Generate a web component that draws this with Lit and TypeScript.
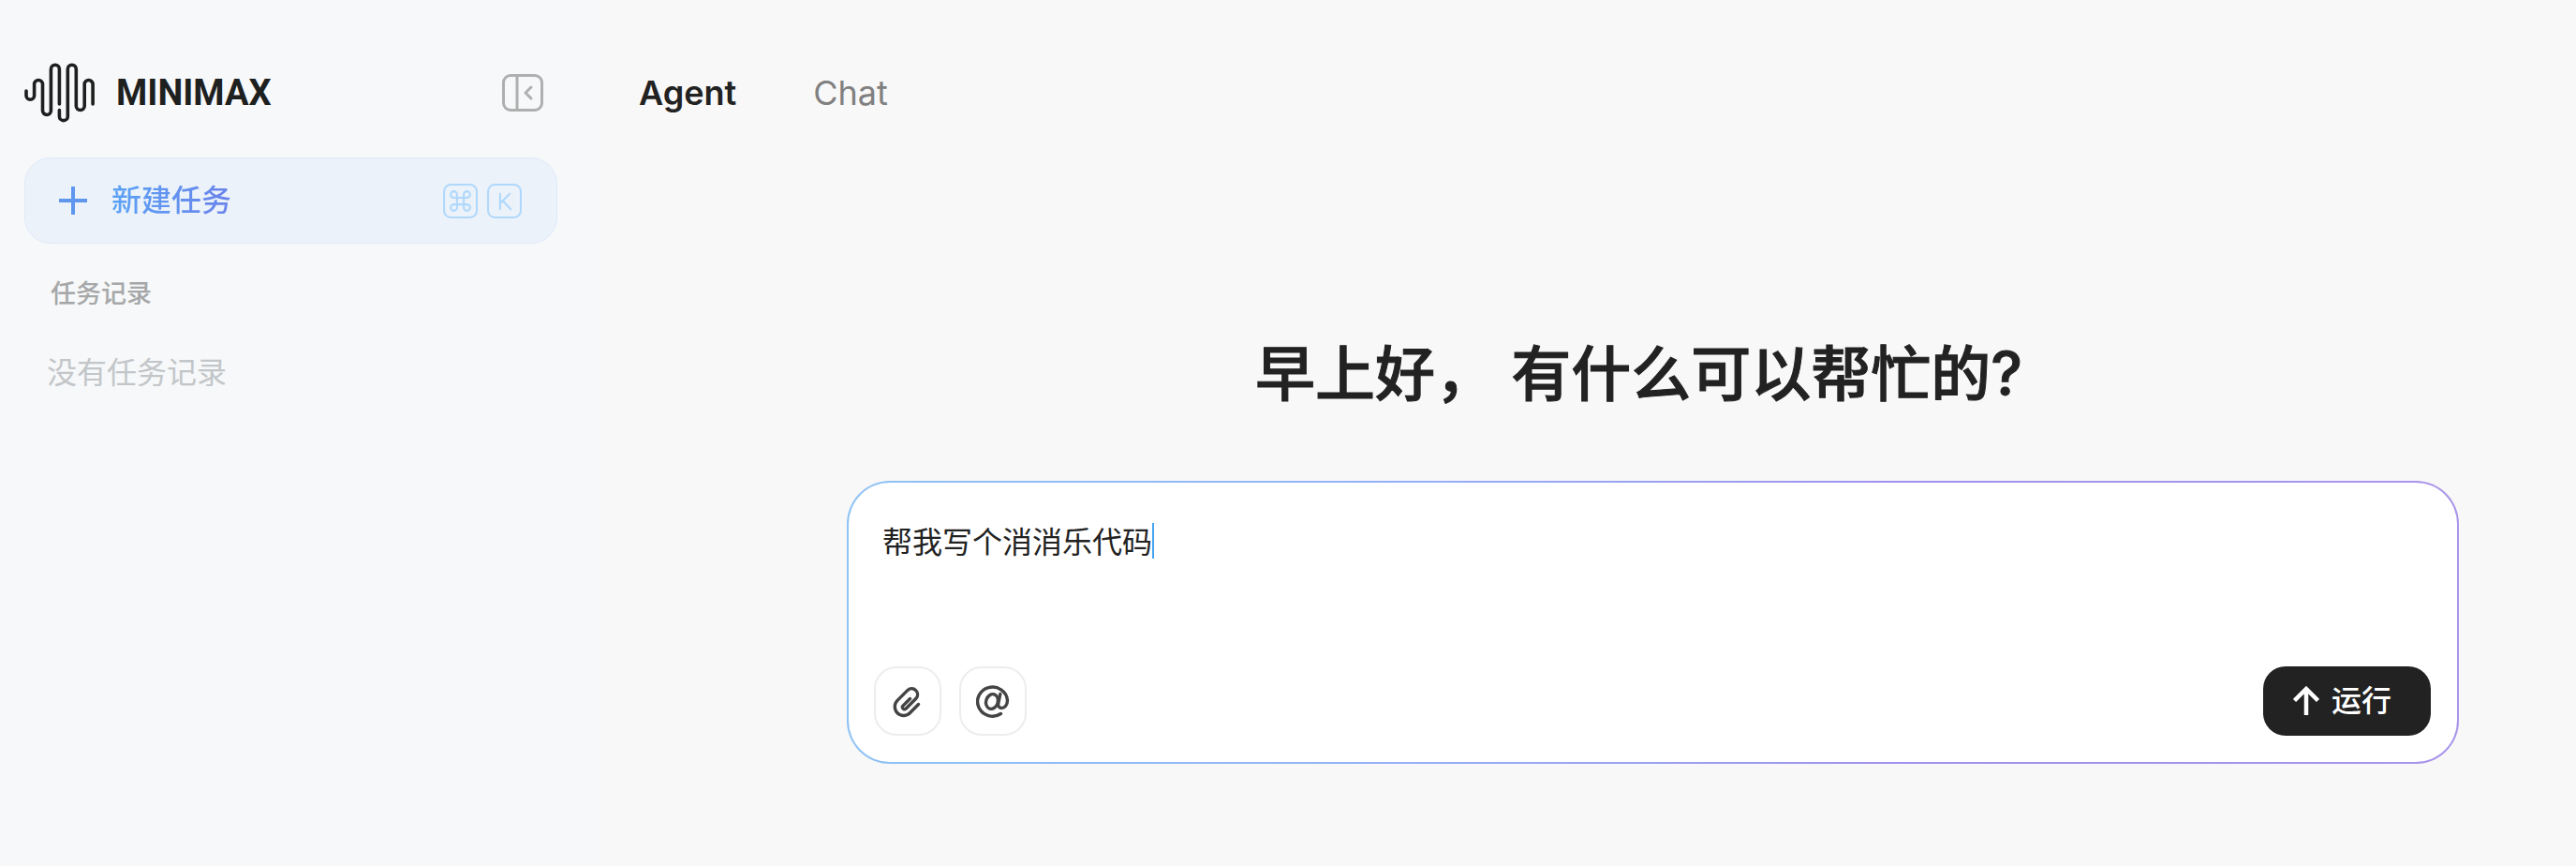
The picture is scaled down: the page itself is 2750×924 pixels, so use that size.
import { LitElement, html, css, svg } from "lit";
import { customElement, state } from "lit/decorators.js";

const logo = svg`<path d="M2 30v5a4.300 4.300 0 0 0 8.600 0V23a4.450 4.450 0 0 1 8.900 0V51a4.450 4.450 0 0 0 8.900 0V6.700a4.500 4.500 0 0 1 9 0V44M37.400 50.500V57.200a4.450 4.450 0 0 0 8.900 0V6.700a4.500 4.500 0 0 1 9 0V46a4.450 4.450 0 0 0 8.900 0V23a4.450 4.450 0 0 1 8.900 0V44"/>`;

@customElement("app-sidebar")
export class AppSidebar extends LitElement {
  static styles = css`
    :host {
      display: block;
      box-sizing: border-box;
      padding: 64px 42px 0 26px;
      background: #f6f8f9;
      font-family: Inter, "Noto Sans CJK SC", sans-serif;
    }
    button { font: inherit; border: 0; background: none; padding: 0; cursor: pointer; }
    svg { display: block; fill: none; stroke: currentColor; stroke-linecap: round; stroke-linejoin: round; }
    .head { display: flex; align-items: center; justify-content: space-between; height: 70px; padding-right: 14px; }
    .brand { display: flex; align-items: center; gap: 22px; color: #1e1f1f; text-decoration: none; }
    .logo { width: 76px; height: 64px; stroke-width: 3.6; }
    .word { font: 700 38px/48px Roboto, sans-serif; }
    .toggle { color: #aeb0b0; }
    .toggle svg { width: 46px; height: 42px; stroke-width: 3; }
    .new {
      display: flex;
      align-items: center;
      box-sizing: border-box;
      width: 100%;
      height: 92px;
      margin-top: 34px;
      padding: 0 37px 0 36px;
      border: 1px solid #e0eaf9;
      border-radius: 28px;
      background: #ebf2fa;
    }
    .plus { width: 30px; height: 30px; stroke: #5f97ee; stroke-width: 4; stroke-linecap: butt; margin-right: 26px; }
    .label {
      font-size: 32px;
      line-height: 48px;
      font-weight: 500;
      color: transparent;
      background: linear-gradient(90deg, #5aa2f5, #6b83ea);
      background-clip: text;
    }
    .keys { display: flex; gap: 10px; margin-left: auto; color: #b0d8fb; }
    .keys svg { width: 37px; height: 37px; stroke-width: 2; }
    h2 { margin: 34px 28px 0; font-size: 27px; line-height: 40px; font-weight: 500; color: #a6a7a8; }
    p { margin: 40px 24px 0; font-size: 32px; line-height: 48px; color: #c3c6c9; }
  `;

  render() {
    return html`
      <div class="head">
        <a class="brand" href="#">
          <svg class="logo" viewBox="0 0 76 64" aria-hidden="true">${logo}</svg>
          <span class="word">MINIMAX</span>
        </a>
        <button class="toggle" aria-label="收起侧边栏">
          <svg viewBox="0 0 46 42"><rect x="2.500" y="2.500" width="41" height="37" rx="7.500"/><path d="M17 2.500v37M32 15 26 21 32 27"/></svg>
        </button>
      </div>
      <button class="new">
        <svg class="plus" viewBox="0 0 30 30"><path d="M15 0v30M0 15h30"/></svg>
        <span class="label">新建任务</span>
        <span class="keys">
          <svg viewBox="0 0 36 36"><rect x="1" y="1" width="34" height="34" rx="7"/><path d="M14.500 14.500h7v7h-7zM14.500 14.500h-3.300a3.300 3.300 0 1 1 3.300-3.300zM21.500 14.500v-3.300a3.300 3.300 0 1 1 3.300 3.300zM21.500 21.500h3.300a3.300 3.300 0 1 1-3.300 3.300zM14.500 21.500v3.300a3.300 3.300 0 1 1-3.300-3.300z"/></svg>
          <svg viewBox="0 0 36 36"><rect x="1" y="1" width="34" height="34" rx="7"/><path d="M13.500 10.500v16M23.500 10.500 13.500 20.500M16.500 18l8 8.500"/></svg>
        </span>
      </button>
      <h2>任务记录</h2>
      <p>没有任务记录</p>
    `;
  }
}

@customElement("prompt-box")
export class PromptBox extends LitElement {
  @state() private text = "帮我写个消消乐代码";

  static styles = css`
    :host {
      display: block;
      padding: 40px 28px 28px 27px;
      border: 2px solid transparent;
      border-radius: 46px;
      background: linear-gradient(#fff, #fff) padding-box, linear-gradient(90deg, #8fc3f5, #93b4f7 30%, #a092ee 65%, #a995ea) border-box;
      font-family: Inter, "Noto Sans CJK SC", sans-serif;
    }
    svg { display: block; fill: none; stroke: currentColor; stroke-linecap: round; stroke-linejoin: round; }
    .field { display: grid; height: 156px; padding: 0 9px; font-size: 32px; line-height: 48px; }
    textarea, .mirror { grid-area: 1 / 1; font: inherit; margin: 0; padding: 0; white-space: pre-wrap; }
    textarea { border: 0; outline: 0; resize: none; background: none; color: #222; caret-color: transparent; }
    .mirror { color: transparent; pointer-events: none; }
    .caret { display: inline-block; width: 2px; height: 38px; margin-top: 3px; vertical-align: top; background: #45a4ef; }
    .bar { display: flex; align-items: center; gap: 19px; }
    button {
      display: flex;
      align-items: center;
      justify-content: center;
      box-sizing: border-box;
      width: 72px;
      height: 74px;
      padding: 0;
      border: 2px solid #ededed;
      border-radius: 24px;
      background: #fff;
      color: #444;
      font: inherit;
    }
    button svg { width: 36px; height: 36px; stroke-width: 3.4; }
    .run {
      width: auto;
      gap: 13px;
      margin-left: auto;
      padding: 0 42px 0 32px;
      border: 0;
      background: #222;
      color: #fff;
      font-size: 32px;
      line-height: 48px;
      font-weight: 500;
    }
    .run svg { width: 28px; height: 32px; stroke-width: 4.500; stroke-linecap: butt; stroke-linejoin: miter; }
  `;

  render() {
    return html`
      <div class="field">
        <textarea
          aria-label="任务描述"
          .value=${this.text}
          @input=${(e: Event) => (this.text = (e.target as HTMLTextAreaElement).value)}
        ></textarea>
        <div class="mirror" aria-hidden="true">${this.text}<span class="caret"></span></div>
      </div>
      <div class="bar">
        <button aria-label="添加附件">
          <svg viewBox="0 0 36 36"><path d="M29.500 21.500 20.300 30.700A9.400 9.400 0 0 1 7 17.400L18 6.400a6.300 6.300 0 0 1 8.900 8.900L16 26.200a2.200 2.200 0 0 1-3.100-3.100L20.500 15.500"/></svg>
        </button>
        <button aria-label="提及">
          <svg viewBox="0 0 36 36"><path d="M26.500 31.500A16 15.500 0 1 1 33.500 17C33.500 22.500 30.500 25.500 27.300 25.500S23.300 23 23.800 20.500L25.800 10.500"/><ellipse cx="17" cy="18.500" rx="6.300" ry="8" transform="rotate(18 17 18.500)"/></svg>
        </button>
        <button class="run">
          <svg viewBox="0 0 28 32"><path d="M14 31V3.500M1.500 15.500 14 3l12.500 12.500"/></svg>
          <span>运行</span>
        </button>
      </div>
    `;
  }
}

@customElement("app-root")
export class AppRoot extends LitElement {
  static styles = css`
    :host {
      display: grid;
      grid-template-columns: 637px 1fr;
      min-height: 100vh;
      background: #f8f8f8;
      color: #222;
      font-family: Inter, "Noto Sans CJK SC", sans-serif;
    }
    main { display: flex; flex-direction: column; }
    nav { display: flex; gap: 82px; padding: 75px 45px 0; }
    nav a { font-size: 36px; line-height: 48px; color: #808080; text-decoration: none; }
    nav .active { color: #222; font-weight: 600; }
    .stage { padding: 225px 125px 0 267px; }
    h1 { margin: 0 30px 64px 0; text-align: center; font-size: 64px; line-height: 101px; font-weight: 500; -webkit-text-stroke: 1px #222; }
  `;

  render() {
    return html`
      <app-sidebar></app-sidebar>
      <main>
        <nav><a class="active" href="#agent">Agent</a><a href="#chat">Chat</a></nav>
        <section class="stage">
          <h1>早上好， 有什么可以帮忙的?</h1>
          <prompt-box></prompt-box>
        </section>
      </main>
    `;
  }
}
